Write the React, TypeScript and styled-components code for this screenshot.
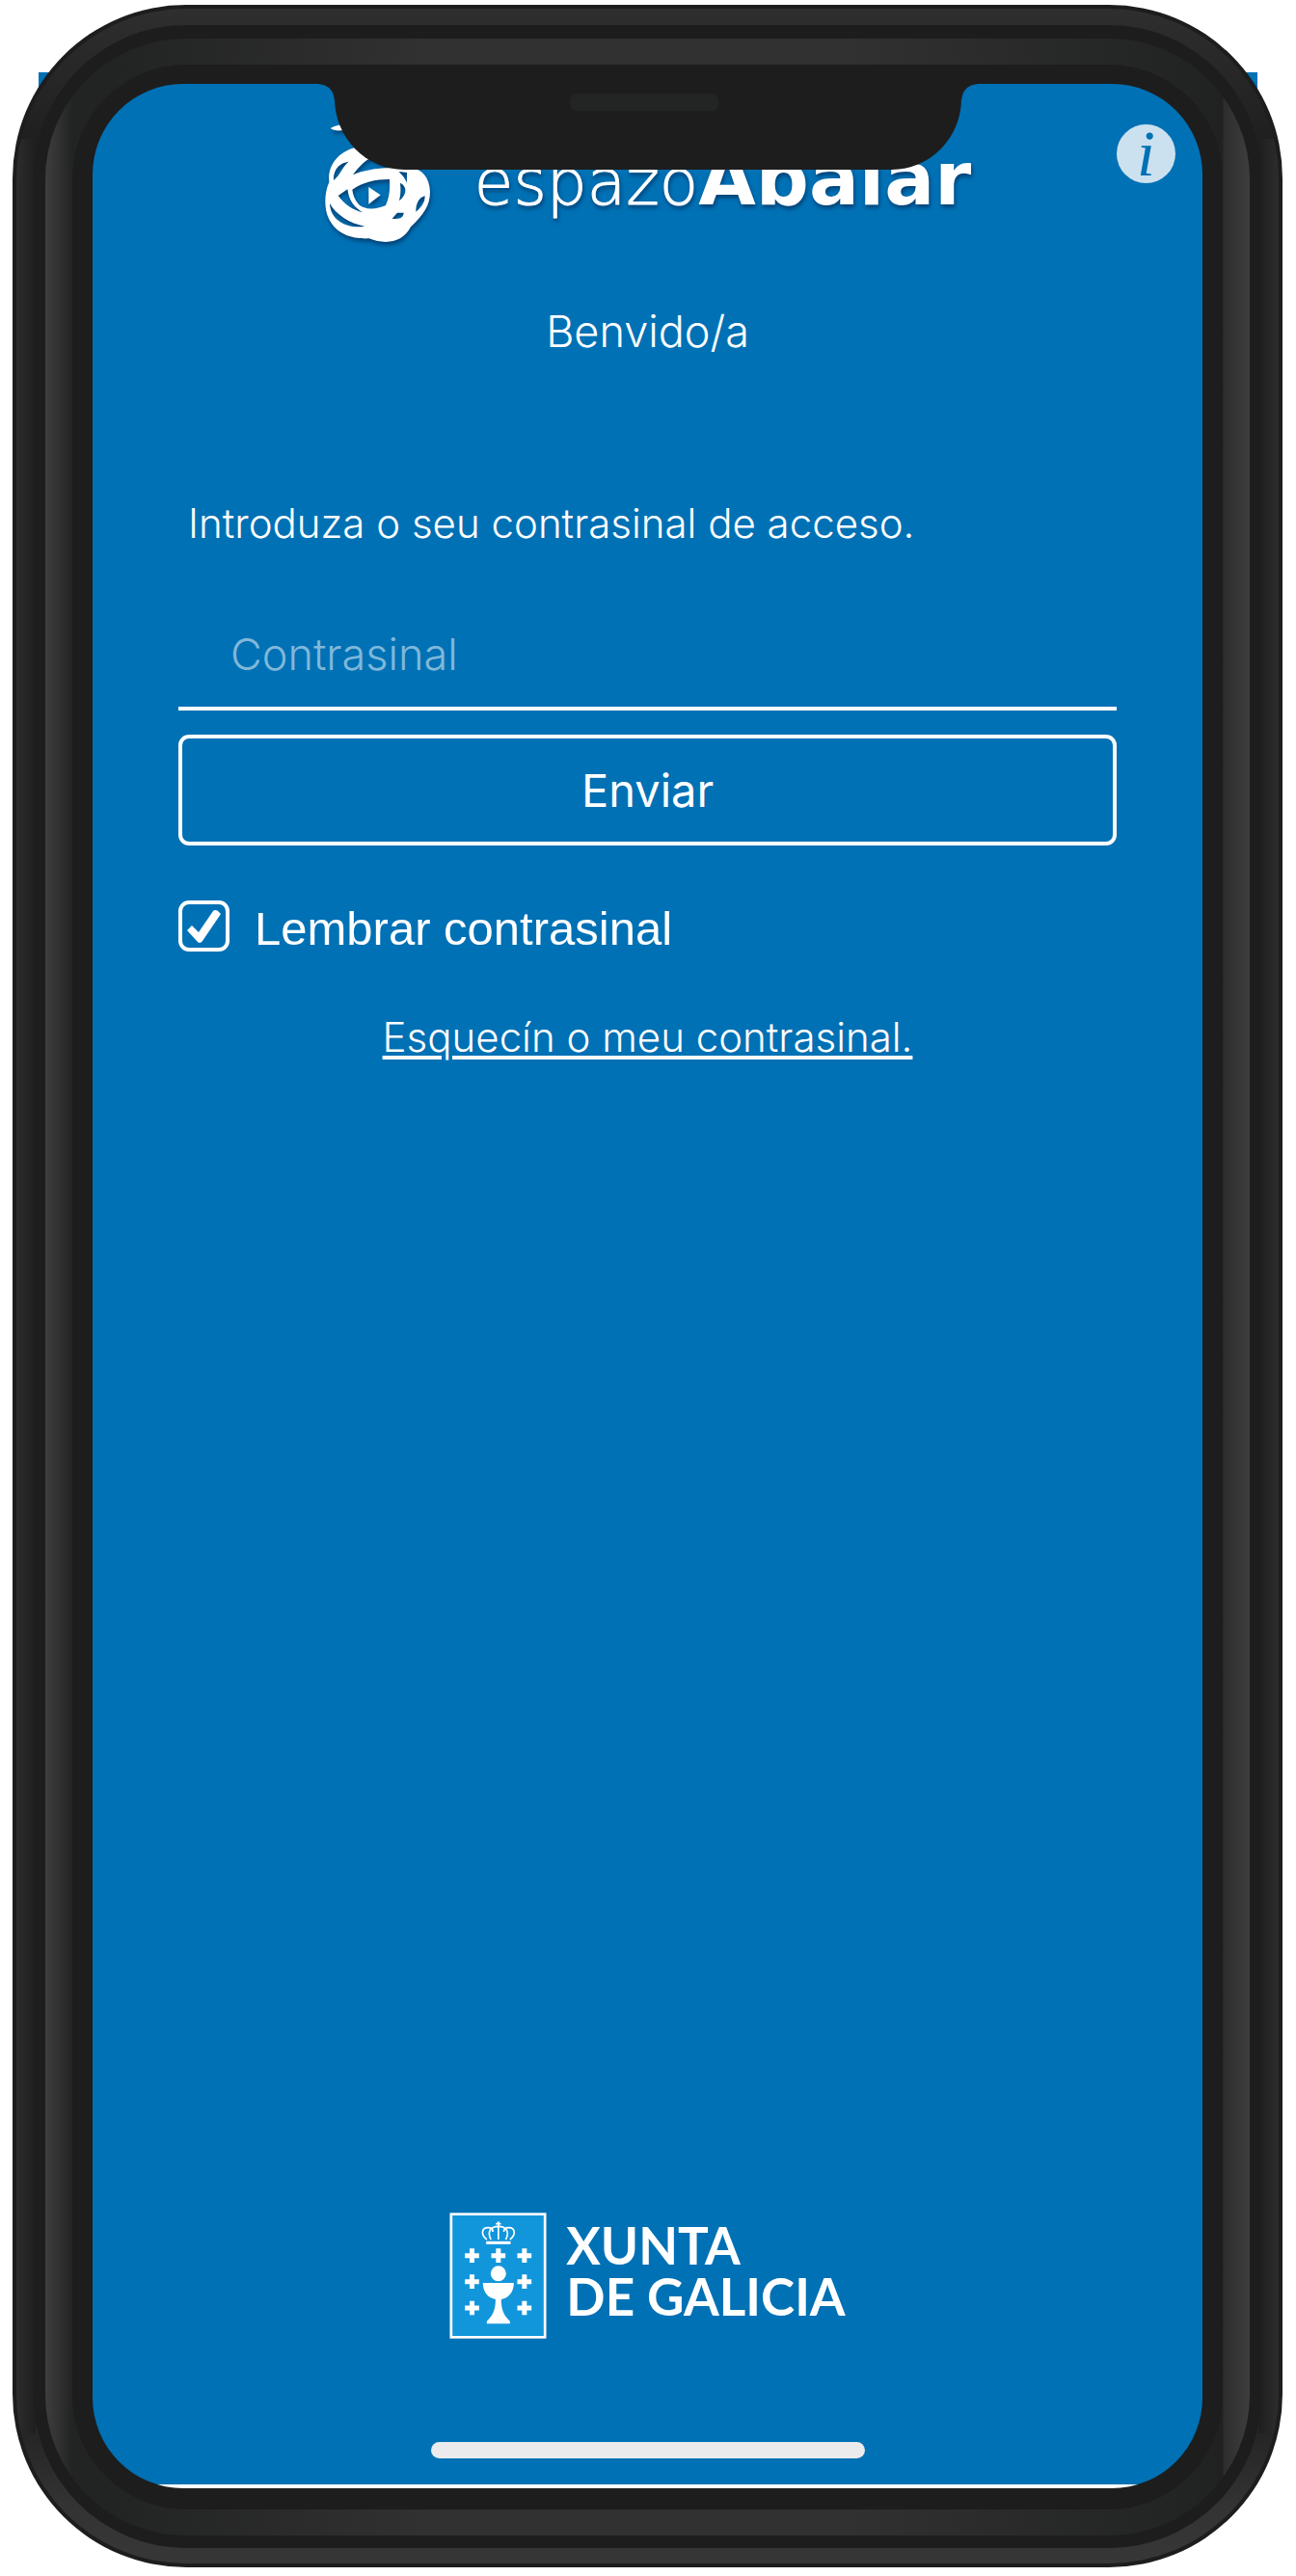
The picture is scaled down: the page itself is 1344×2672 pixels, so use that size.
import React from "react";
import styled, { createGlobalStyle } from "styled-components";

const blue = "#0071b5";
const dark = "#1d1d1d";
const sans = `Inter, "Liberation Sans", Arial, sans-serif`;
const grotesk = `"Liberation Sans", Arial, sans-serif`;

const GlobalStyle = createGlobalStyle`
  *, *::before, *::after { box-sizing: border-box; }
  body { margin: 0; background: #fff; }
`;

const Page = styled.div`
  display: grid;
  min-height: 100vh;
  color: #fff;
  font-family: ${sans};
`;

const Backdrop = styled.div`
  grid-area: 1 / 1;
  height: 60px;
  margin: 75px 40px 0;
  background: ${blue};
`;

const Body = styled.div`
  grid-area: 1 / 1;
  display: grid;
  margin: 5px 14px 9px 13px;
  padding: 4px;
  border-radius: 180px;
  background: ${dark};
`;

const Edge = styled.div`
  display: grid;
  padding: 17px 18px 16px;
  border-radius: 176px;
  background:
    linear-gradient(to right, #2d2d2d, #1e1e1e) left / 20px calc(100% - 270px) no-repeat,
    linear-gradient(to left, #2d2d2d, #1e1e1e) right / 20px calc(100% - 270px) no-repeat,
    linear-gradient(#2f2f2f, #2b2c2b 20px, #1f1f1f 140px, #1f1f1f calc(100% - 170px), #333 calc(100% - 60px), #373737);
`;

const Band = styled.div`
  display: grid;
  padding: 14px 12px 13px;
  border-radius: 158px;
  background: ${dark};
`;

const Bevel = styled.div`
  display: grid;
  padding: 27px 28px;
  border-radius: 146px;
  background: linear-gradient(
    to right,
    #3e3e3e,
    #222423 28px,
    #222423 70px,
    #303130 32%,
    #303130 66%,
    #222423 calc(100% - 60px),
    #202221 calc(100% - 28px),
    #2d2d2d calc(100% - 27px),
    #3e3e3e
  );
`;

const Bezel = styled.div`
  display: grid;
  padding: 20px 21px 22px;
  border-radius: 118px;
  background: ${dark};
`;

const Screen = styled.div`
  position: relative;
  display: flex;
  flex-direction: column;
  overflow: hidden;
  border-radius: 94px;
  background: linear-gradient(#fff, #fff) bottom / 100% 4px no-repeat ${blue};
`;

const Notch = styled.div`
  position: absolute;
  top: 0;
  left: 50%;
  width: 650px;
  height: 89px;
  margin-left: -325px;
  border-radius: 0 0 72px 72px / 0 0 74px 74px;
  background: ${dark};

  &::before,
  &::after {
    content: "";
    position: absolute;
    top: 0;
    width: 16px;
    height: 16px;
  }
  &::before {
    right: 100%;
    background: radial-gradient(circle at 0 100%, transparent 15px, ${dark} 16px);
  }
  &::after {
    left: 100%;
    background: radial-gradient(circle at 100% 100%, transparent 15px, ${dark} 16px);
  }
`;

const Speaker = styled.div`
  width: 154px;
  height: 18px;
  margin: 10px 0 0 244px;
  border-radius: 7px;
  background: #232424;
`;

const Header = styled.header`
  display: grid;
  grid-template-columns: 1fr auto 1fr;
  align-items: start;
  height: 168px;
  padding: 40px 28px 0;
`;

const Brand = styled.div`
  grid-column: 2;
  display: flex;
  align-items: flex-end;
  gap: 44px;
`;

const Scribble = styled.svg`
  width: 112px;
  height: 127px;
  filter: drop-shadow(1px 3px 2px rgba(0, 30, 70, 0.6));
`;

const Wordmark = styled.span`
  padding-bottom: 24px;
  font-family: "DejaVu Sans", sans-serif;
  font-weight: 200;
  font-size: 66px;
  line-height: 80px;
  -webkit-text-stroke: 1px #fff;
  filter: drop-shadow(1px 3px 2px rgba(0, 30, 70, 0.6));

  strong {
    font-weight: 700;
    font-size: 77px;
    -webkit-text-stroke: 0;
  }
`;

const InfoButton = styled.button`
  grid-column: 3;
  justify-self: end;
  width: 61px;
  height: 61px;
  margin-top: 2px;
  padding: 0;
  border: 0;
  border-radius: 50%;
  background: #cce1ef;
  color: ${blue};
  font: italic 68px/61px "Liberation Serif", "Times New Roman", serif;
`;

const Content = styled.main`
  display: flex;
  flex-direction: column;
  padding: 0 89px;
`;

const Welcome = styled.h1`
  margin: 59px 0 139px;
  font-weight: 300;
  font-size: 45px;
  line-height: 60px;
  text-align: center;
`;

const Form = styled.form`
  display: flex;
  flex-direction: column;
`;

const Prompt = styled.label`
  padding-left: 10px;
  font-weight: 300;
  font-size: 42px;
  line-height: 60px;
`;

const PasswordInput = styled.input`
  width: 100%;
  height: 113px;
  margin-top: 51px;
  padding: 0 54px;
  border: 0;
  border-bottom: 4px solid #fff;
  border-radius: 0;
  outline: 0;
  background: transparent;
  color: #fff;
  font: 300 45px/60px ${sans};

  &::placeholder {
    color: #80b8da;
    opacity: 1;
  }
`;

const SubmitButton = styled.button`
  height: 115px;
  margin-top: 25px;
  border: 4px solid #fff;
  border-radius: 11px;
  background: transparent;
  color: #fff;
  font: 400 47px/60px ${sans};
`;

const Remember = styled.label`
  display: flex;
  align-items: flex-start;
  gap: 26px;
  height: 52px;
  margin-top: 57px;
  font: 400 49px/58px ${grotesk};
`;

const CheckWrap = styled.span`
  display: grid;
  width: 53px;
  height: 53px;

  > * {
    grid-area: 1 / 1;
  }
`;

const CheckBox = styled.input`
  appearance: none;
  width: 53px;
  height: 53px;
  margin: 0;
  border: 4px solid #fff;
  border-radius: 11px;

  & + svg {
    visibility: hidden;
    pointer-events: none;
  }
  &:checked + svg {
    visibility: visible;
  }
`;

const ForgotLink = styled.a`
  align-self: center;
  margin-top: 60px;
  color: #fff;
  font-weight: 300;
  font-size: 42px;
  line-height: 60px;
  text-decoration: underline;
  text-decoration-thickness: 4px;
  text-underline-offset: 4px;
`;

const Footer = styled.footer`
  display: flex;
  flex-direction: column;
  align-items: center;
  margin-top: auto;
  padding-bottom: 31px;
`;

const Government = styled.div`
  display: flex;
  align-items: center;
  gap: 20px;
`;

const Crest = styled.svg`
  width: 101px;
  height: 131px;
`;

const GovernmentName = styled.span`
  padding-bottom: 12px;
  font: 700 53px/53px Lato, sans-serif;
`;

const HomeBar = styled.div`
  width: 450px;
  height: 17px;
  margin-top: 107px;
  border-radius: 9px;
  background: #ebebed;
`;

const crosses = [
  [154, 208], [236, 208], [317, 208],
  [154, 289], [317, 289],
  [154, 371], [317, 371],
];

export default function App() {
  return (
    <>
      <GlobalStyle />
      <Page>
        <Backdrop />
        <Body><Edge><Band><Bevel><Bezel>
          <Screen>
            <Header>
              <Brand>
                <Scribble viewBox="60 80 336 381" aria-hidden="true">
                  <path fill="#fff" d="M80 98C95 88 120 85 145 82V98C120 107 90 108 80 98Z" />
                  <path fill="#fff" fillRule="evenodd" d="M170 155C110 165 70 210 76 265C60 300 60 350 75 380C100 430 150 443 200 441C250 461 305 455 330 405C370 365 390 340 390 295C388 250 365 228 335 222C300 190 230 150 170 155Z
                    M90 260C88 228 108 205 137 202C115 220 112 242 90 260Z
                    M150 243C170 215 190 198 205 190L265 222C220 222 180 230 150 243Z
                    M148 289C180 266 220 257 264 257C266 290 262 320 251 339C220 352 185 352 168 335C155 320 150 305 148 289Z
                    M104 308L133 288C138 325 155 345 180 360C150 352 125 336 104 308Z
                    M78 332C95 365 140 395 187 403C140 412 80 390 78 332Z
                    M297 268C320 280 318 305 294 324C299 300 299 290 297 268Z
                    M346 358C346 330 357 313 374 309C374 330 362 345 346 358Z
                    M272 379L288 361L308 361C306 375 300 382 272 379Z
                    M293 233L318 236V268C312 252 303 245 293 233Z" />
                  <path fill="#fff" d="M199 281L236 306L199 334Z" />
                </Scribble>
                <Wordmark>espazo<strong>Abalar</strong></Wordmark>
              </Brand>
              <InfoButton type="button" aria-label="Información">i</InfoButton>
            </Header>

            <Content>
              <Welcome>Benvido/a</Welcome>
              <Form onSubmit={(e) => e.preventDefault()}>
                <Prompt htmlFor="contrasinal">Introduza o seu contrasinal de acceso.</Prompt>
                <PasswordInput id="contrasinal" type="password" placeholder="Contrasinal" />
                <SubmitButton type="submit">Enviar</SubmitButton>
                <Remember>
                  <CheckWrap>
                    <CheckBox type="checkbox" defaultChecked />
                    <svg viewBox="0 0 53 53" aria-hidden="true">
                      <path d="M9 31L14 26L21 33L36 11Q38 9 41 11L44 14L25 42Q22 46 19 42Z" fill="#fff" />
                    </svg>
                  </CheckWrap>
                  Lembrar contrasinal
                </Remember>
                <ForgotLink href="#recuperar">Esquecín o meu contrasinal.</ForgotLink>
              </Form>
            </Content>

            <Footer>
              <Government>
                <Crest viewBox="84 74 302 393" aria-hidden="true">
                  <rect x="89" y="79" width="292" height="383" fill="#1296db" stroke="#fff" strokeWidth="8" />
                  {crosses.map(([x, y]) => (
                    <path key={`${x}-${y}`} d={`M${x - 22} ${y}H${x + 22}M${x} ${y - 22}V${y + 22}`} stroke="#fff" strokeWidth="15" />
                  ))}
                  <g fill="none" stroke="#fff" strokeWidth="5">
                    <path d="M200 158C180 142 184 121 204 121C214 121 219 127 219 134M272 158C292 142 288 121 268 121C258 121 253 127 253 134" />
                    <path d="M213 158C200 134 212 117 236 117C260 117 272 134 259 158M236 117V158" />
                    <path d="M228 109H244M236 102V116" />
                    <path d="M198 168H274" strokeWidth="9" />
                  </g>
                  <g fill="#fff">
                    <circle cx="236" cy="264" r="24" />
                    <path d="M188 293H284C284 322 268 340 245 344C244 378 256 398 272 412V420H200V412C216 398 228 378 227 344C204 340 188 322 188 293Z" />
                  </g>
                </Crest>
                <GovernmentName>XUNTA<br />DE GALICIA</GovernmentName>
              </Government>
              <HomeBar />
            </Footer>

            <Notch><Speaker /></Notch>
          </Screen>
        </Bezel></Bevel></Band></Edge></Body>
      </Page>
    </>
  );
}
